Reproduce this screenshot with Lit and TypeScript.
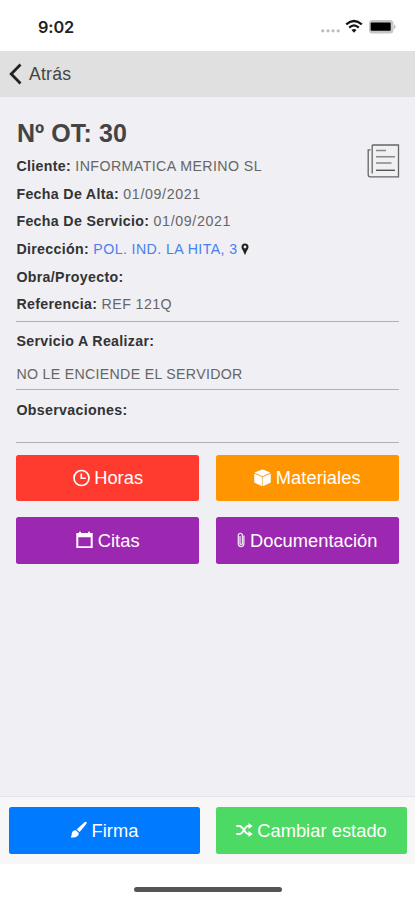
import { LitElement, html, css, svg } from "lit";
import { customElement } from "lit/decorators.js";

const icons: Record<string, unknown> = {
  clock: html`<svg class="icon" width="17" height="18" viewBox="0 0 17 18">${svg`<circle cx="8.5" cy="9" r="7.5" fill="none" stroke="currentColor" stroke-width="1.7"/><path d="M8.3 4.5V9.3H12.8" fill="none" stroke="currentColor" stroke-width="1.6"/>`}</svg>`,
  cube: html`<svg class="icon" width="17" height="18" viewBox="0 0 17 18">${svg`<path d="M8.5 0.8L15.8 3.6L8.5 6.9L1.2 3.6ZM0.6 5L7.9 8.3V16.7L0.6 13.4ZM16.4 5L9.1 8.3V16.7L16.4 13.4Z" fill="currentColor" stroke="currentColor" stroke-width=".7" stroke-linejoin="round"/>`}</svg>`,
  calendar: html`<svg class="icon" width="17" height="18" viewBox="0 0 17 18">${svg`<path fill-rule="evenodd" d="M0.3 2H3V0.8H5V2H12V0.8H14V2H16.7V17H0.3ZM2.3 6.3V15.2H14.7V6.3Z" fill="currentColor"/>`}</svg>`,
  clip: html`<svg class="icon" width="8" height="18" viewBox="0 0 8 18">${svg`<path d="M6.9 4.4V12.8A2.7 2.7 0 0 1 1.3 12.8V4A2.1 2.1 0 0 1 5.4 4V12.2A1.2 1.2 0 0 1 3 12.2V5" fill="none" stroke="currentColor" stroke-width="1.3" stroke-opacity=".85"/>`}</svg>`,
  brush: html`<svg class="icon" width="17" height="18" viewBox="0 0 17 18">${svg`<path d="M16.4 1C17 1.6 16.5 2.7 15.9 3.5L9.6 11.1L6.6 8.4L14 1.8C14.9 1 15.8.5 16.4 1ZM5.8 9.2L8.8 12C8.8 15.5 5.8 17 .5 16.2C1.9 15.2 1.5 14.1 1.8 12.3C2.3 10 4 9 5.8 9.2Z" fill="currentColor"/>`}</svg>`,
  shuffle: html`<svg class="icon" width="17" height="18" viewBox="0 0 17 18">${svg`<path d="M.3 5H3.3C7.5 5 8.3 13 12.3 13H13.5M.3 13H3.3C7.5 13 8.3 5 12.3 5H13.5" fill="none" stroke="currentColor" stroke-width="1.9"/><path d="M12.5 1.9L16.8 5L12.5 8.1ZM12.5 9.9L16.8 13L12.5 16.1Z" fill="currentColor"/>`}</svg>`,
};

@customElement("app-root")
export class AppRoot extends LitElement {
  static styles = css`
    :host {
      display: flex;
      flex-direction: column;
      width: 415px;
      height: 900px;
      overflow: hidden;
      background: #fff;
      font-family: "Liberation Sans", Arial, sans-serif;
      color: #333;
    }
    svg { display: block; flex: none; }
    .icon { margin-top: -1px; }
    .status {
      height: 51px;
      box-sizing: border-box;
      padding: 2px 18px 0 38px;
      display: flex;
      align-items: center;
      justify-content: space-between;
    }
    .time {
      font: 600 16.3px/20px Inter, "Liberation Sans", sans-serif;
      letter-spacing: -0.1px;
      color: #222;
      padding-top: 1px;
    }
    .nav {
      height: 46px;
      background: #e0e0e0;
      display: flex;
      align-items: center;
      padding-left: 9px;
      gap: 7px;
      font-size: 17.6px;
      letter-spacing: 0.25px;
      color: #444;
    }
    main {
      flex: 1;
      background: #efeff4;
      padding: 0 16px 0 16.4px;
    }
    .head { display: flex; justify-content: space-between; height: 55px; }
    h1 {
      margin: 20px 0 0 0.5px;
      font-size: 25px;
      line-height: 32px;
      color: #444;
      letter-spacing: 0.1px;
    }
    .doc { margin: 47px -1px 0 0; }
    .row {
      display: flex;
      align-items: center;
      height: 27.7px;
      font-size: 14.2px;
      white-space: pre;
      letter-spacing: 0.42px;
      color: #666;
    }
    .row b { color: #333; letter-spacing: 0.33px; }
    .num { letter-spacing: 0.65px; }
    .link { color: #4a80f0; letter-spacing: 0.4px; }
    .plain { letter-spacing: 0.3px; }
    .pin { margin-left: 4px; }
    .section { border-top: 1px solid #b0b0b4; box-sizing: border-box; }
    .service { height: 68.6px; margin-top: 2.5px; padding-top: 5.5px; }
    .service .text { padding-top: 5px; }
    .notes { height: 52.5px; padding-top: 6px; }
    .actions {
      padding-top: 12px;
      display: grid;
      grid-template-columns: 1fr 1fr;
      gap: 16px 16.5px;
    }
    .btn {
      height: 46.5px;
      border-radius: 2.5px;
      box-sizing: border-box;
      padding-top: 1px;
      color: #fff;
      display: flex;
      align-items: center;
      justify-content: center;
      gap: 4.5px;
      font-size: 18.3px;
      letter-spacing: 0.04px;
      white-space: pre;
    }
    .red { background: #ff3b30; }
    .orange { background: #ff9500; }
    .purple { background: #9c27b0; }
    .blue { background: #007aff; }
    .green { background: #4cd964; }
    .toolbar {
      height: 68px;
      box-sizing: border-box;
      padding: 10px 8.5px 0 9px;
      border-top: 1px solid #e6e6ea;
      background: #f7f7f8;
      display: grid;
      grid-template-columns: 1fr 1fr;
      gap: 16.5px;
    }
    .home { height: 36px; display: flex; justify-content: center; padding-left: 1px; }
    .bar { width: 148px; height: 5px; margin-top: 22.5px; border-radius: 3px; background: #555; }
  `;

  private button(color: string, icon: string, label: string) {
    return html`<div class="btn ${color}">${icons[icon]}<span>${label}</span></div>`;
  }

  render() {
    return html`
      <div class="status">
        <div class="time">9:02</div>
        <svg width="76" height="18" viewBox="0 0 76 18">
          <g fill="#bbb"><circle cx="1.8" cy="12.8" r="1.6"/><circle cx="7" cy="12.8" r="1.6"/><circle cx="12" cy="12.8" r="1.6"/><circle cx="17.2" cy="12.8" r="1.6"/></g>
          <g fill="none" stroke="#161616" stroke-width="2.2"><path d="M25.2 6.4Q33 -.4 40.8 6.4"/><path d="M28.2 9.6Q33 5.2 37.8 9.6"/></g>
          <path d="M30.5 12Q33 9.9 35.5 12L33 14.8Z" fill="#161616"/>
          <rect x="48" y="2" width="24.5" height="13.5" rx="3.5" fill="#c6c6c6"/>
          <path d="M73.3 6.2Q75.6 8.7 73.3 11.2Z" fill="#999"/>
          <rect x="49.7" y="4.6" width="20" height="8.2" rx=".8" fill="#000"/>
        </svg>
      </div>
      <div class="nav">
        <svg width="13" height="22" viewBox="0 0 13 22"><path d="M11.5 1.5L2.2 11L11.5 20.5" fill="none" stroke="#222" stroke-width="2.8"/></svg>
        <span>Atrás</span>
      </div>
      <main>
        <div class="head">
          <h1>Nº OT: 30</h1>
          <svg class="doc" width="33" height="34" viewBox="0 0 33 34">
            <g fill="none" stroke="#666" stroke-width="1.3">
              <path d="M5.2 1H31.5V32.8H3.2Q1.2 32.8 1.2 30.5V5.8H3.6"/>
              <path d="M5.2 1V29.5"/>
            </g>
            <g fill="none" stroke="#888" stroke-width="1.4"><path d="M9 6.5H19M9 12.8H28M9 19H24.5"/><path d="M9 26.3H28" stroke="#555"/></g>
          </svg>
        </div>
        <div class="row"><b>Cliente: </b><span>INFORMATICA MERINO SL</span></div>
        <div class="row"><b>Fecha De Alta: </b><span class="num">01/09/2021</span></div>
        <div class="row"><b>Fecha De Servicio: </b><span class="num">01/09/2021</span></div>
        <div class="row"><b>Dirección: </b><span class="link">POL. IND. LA HITA, 3</span>
          <svg class="pin" width="8" height="12" viewBox="0 0 8 12"><path fill-rule="evenodd" d="M4 .5A3.5 3.5 0 0 1 7.5 4C7.5 6 5.5 7.5 4.5 11.5H3.5C2.5 7.5.5 6 .5 4A3.5 3.5 0 0 1 4 .5ZM4 2.6A1.4 1.4 0 1 0 4 5.4A1.4 1.4 0 1 0 4 2.6Z" fill="#222"/></svg>
        </div>
        <div class="row"><b>Obra/Proyecto:</b></div>
        <div class="row"><b>Referencia: </b><span>REF 121Q</span></div>
        <div class="section service">
          <div class="row"><b>Servicio A Realizar:</b></div>
          <div class="row text"><span class="plain">NO LE ENCIENDE EL SERVIDOR</span></div>
        </div>
        <div class="section notes"><div class="row"><b>Observaciones:</b></div></div>
        <div class="section actions">
          ${this.button("red", "clock", "Horas")}
          ${this.button("orange", "cube", "Materiales")}
          ${this.button("purple", "calendar", "Citas")}
          ${this.button("purple", "clip", "Documentación")}
        </div>
      </main>
      <div class="toolbar">
        ${this.button("blue", "brush", "Firma")}
        ${this.button("green", "shuffle", "Cambiar estado")}
      </div>
      <div class="home"><div class="bar"></div></div>
    `;
  }
}
